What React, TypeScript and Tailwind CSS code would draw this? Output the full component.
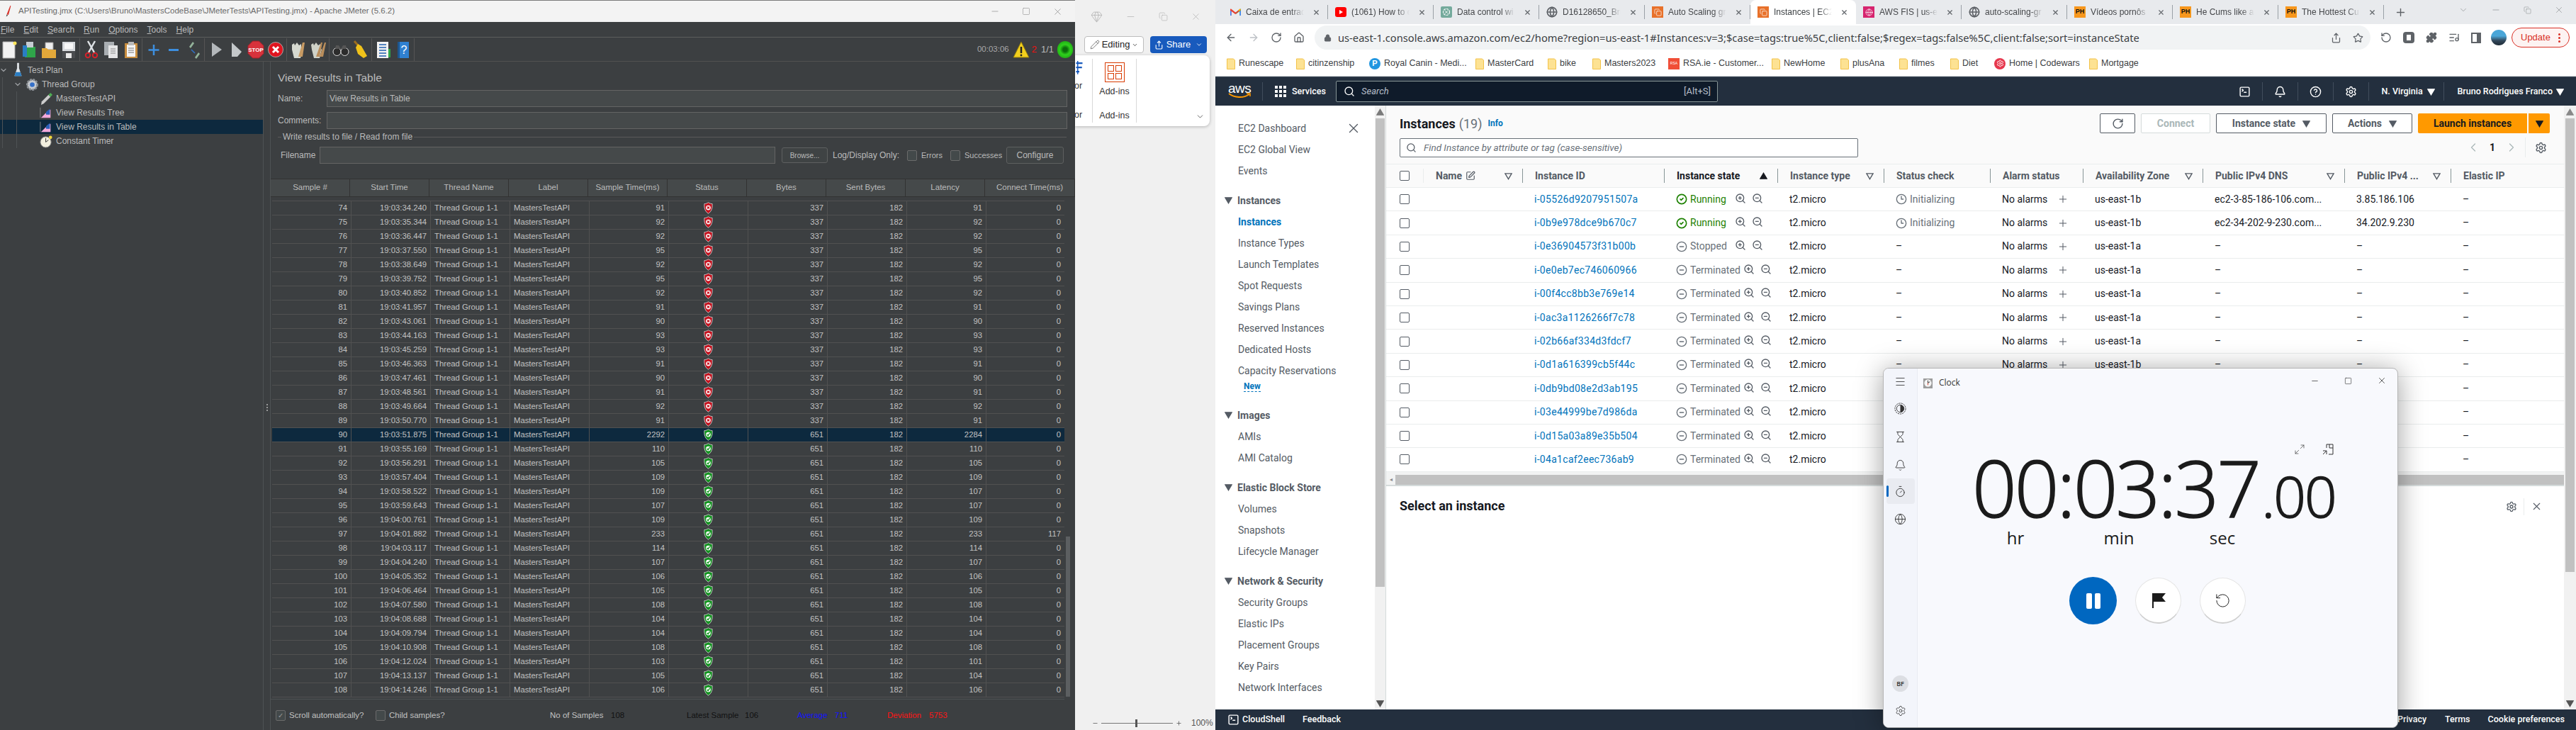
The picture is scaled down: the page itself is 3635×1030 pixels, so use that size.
import React from 'react';
import {
  ArrowLeft, ArrowRight, RotateCw, House, Lock, Star, Share, Puzzle, ListMusic, X, Plus, Minus, Square, Copy, ChevronDown,
  ChevronLeft, ChevronRight, Search, Bell, CircleHelp, Settings, SquareTerminal, ZoomIn, ZoomOut, CircleCheck, CircleMinus,
  Clock3, Pencil, Menu, Hourglass, Timer, Globe, RotateCcw, Maximize2, Gem, SquarePen,
} from 'lucide-react';

const SANS = "font-['Liberation_Sans',sans-serif]";

/* ---------- JMeter data ---------- */
const TIMES = [
  '19:03:34.240', '19:03:35.344', '19:03:36.447', '19:03:37.550', '19:03:38.649', '19:03:39.752', '19:03:40.852',
  '19:03:41.957', '19:03:43.061', '19:03:44.163', '19:03:45.259', '19:03:46.363', '19:03:47.461', '19:03:48.561',
  '19:03:49.664', '19:03:50.770', '19:03:51.875', '19:03:55.169', '19:03:56.291', '19:03:57.404', '19:03:58.522',
  '19:03:59.643', '19:04:00.761', '19:04:01.882', '19:04:03.117', '19:04:04.240', '19:04:05.352', '19:04:06.464',
  '19:04:07.580', '19:04:08.688', '19:04:09.794', '19:04:10.908', '19:04:12.024', '19:04:13.137', '19:04:14.246',
];
const SAMPLE = [91, 92, 92, 95, 92, 95, 92, 91, 90, 93, 93, 91, 90, 91, 92, 91, 2292, 110, 105, 109, 109, 107, 109, 233, 114, 107, 106, 105, 108, 104, 104, 108, 103, 105, 106];
const LATENCY = [91, 92, 92, 95, 92, 95, 92, 91, 90, 93, 93, 91, 90, 91, 92, 91, 2284, 110, 105, 109, 107, 107, 109, 233, 114, 107, 106, 105, 108, 104, 104, 108, 101, 104, 106];
const HEADERS = ['Sample #', 'Start Time', 'Thread Name', 'Label', 'Sample Time(ms)', 'Status', 'Bytes', 'Sent Bytes', 'Latency', 'Connect Time(ms)'];

/* ---------- JMeter icons ---------- */
const Shield = ({ ok }: { ok: boolean }) => (
  <svg viewBox="0 0 14 18" className="w-[13px] h-[17px]">
    <path d="M7 .6C9 2 11 2.6 13 2.6c.5 6.5-1 11.5-6 14.8C2 14.100.5 9.100 1 2.600 3 2.600 5 2 7 .6Z" fill={ok ? '#12931f' : '#c5101d'} stroke="#c9c9c9" strokeWidth="1" />
    <circle cx="7" cy="8.5" r="3.6" fill="#fff" />
    {ok ? (
      <path d="M5 8.500l1.600 1.800L9.200 6.500" fill="none" stroke="#12931f" strokeWidth="1.5" />
    ) : (
      <path d="M5.400 6.900l3.200 3.200m0-3.200l-3.200 3.200" stroke="#c5101d" strokeWidth="1.5" />
    )}
  </svg>
);

const TB = ({ children }: { children: React.ReactNode }) => (
  <svg viewBox="0 0 24 26" className="w-[24px] h-[26px] shrink-0 block">{children}</svg>
);

const toolbarIcons: Record<string, React.ReactNode> = {
  new: <TB><path d="M3 2h15l2 3v20H3z" fill="#f2f2f2" stroke="#aaa" /><circle cx="20" cy="4" r="2.5" fill="#ffe65c" /></TB>,
  templates: <TB><path d="M6 9h15v15H6z" fill="#2fa54a" /><path d="M8 2h10v8H8z" fill="#c6cdd3" /><path d="M3 7h6v16H3z" fill="#2a7ec4" /></TB>,
  open: <TB><path d="M7 3h11v10H7z" fill="#eee" stroke="#999" /><path d="M2 11h7l2 2h11v12H2z" fill="#e2a83a" /></TB>,
  save: <TB><path d="M3 2h18v23H3z" fill="#d7dadd" /><path d="M6 4h12v8H6z" fill="#f7f7f7" /><path d="M3 15h18v10H3z" fill="#4b4d50" /><path d="M8 18h8v7H8z" fill="#e8e8e8" /></TB>,
  cut: <TB><path d="M7 1l9 16M17 1L8 17" stroke="#dfe3e6" strokeWidth="2.5" /><circle cx="7" cy="21" r="3.2" fill="none" stroke="#d5222a" strokeWidth="2" /><circle cx="17" cy="21" r="3.2" fill="none" stroke="#d5222a" strokeWidth="2" /></TB>,
  copy: <TB><path d="M2 2h14v19H2z" fill="#a9aeb2" /><path d="M8 7h13v18H8z" fill="#e4e5e6" /><path d="M11 12h7M11 15h7M11 18h7" stroke="#888" /></TB>,
  paste: <TB><path d="M3 4h18v21H3z" fill="#c78d3f" /><path d="M6 6h12v17H6z" fill="#f4f4f4" /><path d="M8 2h8v5H8z" fill="#bbb" /><path d="M8 11h8M8 14h8M8 17h8" stroke="#777" /></TB>,
  plus: <TB><path d="M12 6v15M4.500 13.500h15" stroke="#3d8fe0" strokeWidth="2.5" /></TB>,
  minus: <TB><path d="M5 13.500h14" stroke="#3d8fe0" strokeWidth="3" /></TB>,
  toggle: <TB><path d="M6 9l5-7 2 2-5 7z" fill="#93b39a" /><path d="M9 13l5 5" stroke="#2f72c9" strokeWidth="1.5" /><path d="M14 24l5-7 2 2-5 7z" fill="#93b39a" /></TB>,
  play: <TB><path d="M6 3l14 10L6 23z" fill="#b4b8bb" /></TB>,
  playNo: <TB><path d="M6 3l14 13-6 7H6z" fill="#c4c8ca" /></TB>,
  stop: <TB><path d="M7.500 1h9L23 7.500v11L16.500 25h-9L1 18.500v-11z" fill="#d7323c" stroke="#9e2028" /><text x="12" y="16" fontSize="8" fontWeight="700" fill="#fff" textAnchor="middle" fontFamily="Liberation Sans">STOP</text></TB>,
  shutdown: <TB><circle cx="12" cy="13" r="10.5" fill="#e0141f" stroke="#a5a5a5" /><path d="M8 9l8 8m0-8l-8 8" stroke="#fff" strokeWidth="3" /></TB>,
  clear: <TB><path d="M3 6l3-2 1 3 3-4 3 4 3-2v5l2 3-3 12H6L3 13z" fill="#d6d9d0" /><path d="M18 3h3l-3 20h-6z" fill="#c79a63" /></TB>,
  clearAll: <TB><path d="M2 6l3-2 1 3 3-4 3 4 3-2v5l2 3-3 12H6L3 13z" fill="#cfd2c8" /><path d="M16 3h2l-4 20h-5z" fill="#b98d5b" /><path d="M21 3h2l-4 20h-5z" fill="#b98d5b" /></TB>,
  find: <TB><circle cx="6.500" cy="16" r="5.5" fill="#2c2c2c" stroke="#ddd" /><circle cx="17.500" cy="16" r="5.5" fill="#2c2c2c" stroke="#ddd" /><path d="M5 7h4l3 5 3-5h4l1 5H4z" fill="#555" /></TB>,
  broom: <TB><path d="M3 1l6 7" stroke="#9c6d1f" strokeWidth="3" /><path d="M8 5l5 3 8 14-5 3-8-6-3-9z" fill="#f0c21a" /></TB>,
  fn: <TB><path d="M3 2h16v23H3z" fill="#f2f2f2" /><path d="M6 6h10M6 10h10M6 14h10M6 18h10M6 22h10" stroke="#2060b0" strokeWidth="1.5" /><path d="M19 12h3v12h-3z" fill="#2fa54a" /></TB>,
  help: <TB><path d="M4 2h16v23H4z" fill="#2f80d0" /><path d="M4 2h3v23H4z" fill="#1d568f" /><text x="13" y="19" fontSize="16" fill="#fff" textAnchor="middle" fontFamily="Liberation Sans">?</text></TB>,
};

const toolbarGroups = [
  ['new', 'templates', 'open', 'save'],
  ['cut', 'copy', 'paste'],
  ['plus', 'minus', 'toggle'],
  ['play', 'playNo', 'stop', 'shutdown'],
  ['clear', 'clearAll'],
  ['find', 'broom'],
  ['fn', 'help'],
];

const Flask = () => (
  <svg viewBox="0 0 14 24" className="w-[13px] h-[24px]"><path d="M5.500 1h3v8l4 12H1.500l4-12z" fill="#dfe3e6" /><path d="M3.500 15h7l2 6H1.500z" fill="#2a7ec4" /></svg>
);
const GearIcon = () => (
  <svg viewBox="0 0 20 20" className="w-[19px] h-[19px]"><circle cx="10" cy="10" r="7.5" fill="#c8ccd0" stroke="#8c9196" strokeWidth="3" strokeDasharray="3 1.5" /><circle cx="10" cy="10" r="3.5" fill="#3570c8" /></svg>
);
const Pipette = () => (
  <svg viewBox="0 0 20 20" className="w-[19px] h-[19px]"><path d="M2 19l1-5L13 4l3 3L6 17z" fill="#ccc" /><path d="M13 4l3-3 3 3-3 3z" fill="#4fae55" /></svg>
);
const Listener = () => (
  <svg viewBox="0 0 20 20" className="w-[18px] h-[20px]"><path d="M2 18l7-7 8-6v13z" fill="#f4a9dc" /><path d="M10 9l6-5v9h-6z" fill="#2a60b8" /><path d="M1 2v16" stroke="#888" /></svg>
);
const TimerIcon = () => (
  <svg viewBox="0 0 20 20" className="w-[19px] h-[19px]"><circle cx="9" cy="11" r="8" fill="#f3f0e0" stroke="#888" /><path d="M9 5v6l4-3" stroke="#333" fill="none" /><circle cx="16" cy="4" r="2.5" fill="#f2d83b" /></svg>
);

const TreeRow = ({ indent, icon, label, chevron, selected }: { indent: string; icon: React.ReactNode; label: string; chevron?: boolean; selected?: boolean }) => (
  <div className={`relative flex items-center h-[20px] ${indent} ${selected ? 'bg-[#0d293e]' : ''}`}>
    {chevron && <ChevronDown size={12} strokeWidth={2.5} className="absolute text-[#9a9da0] -translate-x-[16px]" />}
    <span className="w-[20px] flex justify-center shrink-0">{icon}</span>
    <span className="ml-[4px] text-[12px] text-[#bbbbbb] whitespace-nowrap">{label}</span>
  </div>
);

const Check = ({ checked }: { checked?: boolean }) => (
  <span className="flex items-center justify-center w-[14px] h-[15px] bg-[#43494a] border border-[#6b6b6b] rounded-[2px] text-[10px] text-[#999] leading-none">{checked ? '✓' : ''}</span>
);

const JMeter = () => (
  <div className={`${SANS} w-[1517px] shrink-0 h-full flex flex-col bg-[#3c3f41] text-[#bbbbbb]`}>
    <div className="h-[31px] shrink-0 bg-[#f3f3f3] border-t border-[#7a7a7a] flex items-center text-[#6a6a6a] text-[11.5px]">
      <svg viewBox="0 0 12 20" className="w-[10px] h-[18px] ml-[7px]"><path d="M9 0L3 15l3 1L10 1z" fill="#d8332b" /><path d="M3 15l-1 4 3-2z" fill="#444" /></svg>
      <span className="ml-[9px]">APITesting.jmx (C:\Users\Bruno\MastersCodeBase\JMeterTests\APITesting.jmx) - Apache JMeter (5.6.2)</span>
      <div className="ml-auto flex items-center gap-[31px] mr-[17px] text-[#7a7a7a]">
        <Minus size={14} strokeWidth={1} />
        <Square size={12} strokeWidth={1} />
        <X size={15} strokeWidth={1} />
      </div>
    </div>
    <div className="h-[22px] shrink-0 flex items-center border-b border-[#5d5d5d] text-[12px] pl-[1px] gap-[13px]">
      {['File', 'Edit', 'Search', 'Run', 'Options', 'Tools', 'Help'].map(m => (
        <span key={m}><span className="underline">{m[0]}</span>{m.slice(1)}</span>
      ))}
    </div>
    <div className="h-[34px] shrink-0 flex items-center border-b border-[#515151] pl-[1px]">
      {toolbarGroups.map((g, i) => (
        <div key={i} className="flex items-center gap-[4px] pr-[3px] mr-[4px] border-r border-[#555] h-[32px]">
          {g.map(k => <span key={k}>{toolbarIcons[k]}</span>)}
        </div>
      ))}
      <div className="ml-auto flex items-center pr-[3px] text-[11.5px]">
        <span className="text-[#a8a8a8]">00:03:06</span>
        <svg viewBox="0 0 24 24" className="w-[24px] h-[26px] ml-[5px]"><path d="M12 1l11 22H1z" fill="#f2cf1d" stroke="#8f7a10" /><path d="M12 8v9" stroke="#222" strokeWidth="2.5" /><circle cx="12" cy="20" r="1.4" fill="#222" /></svg>
        <span className="text-[#ee1111] ml-[3px] text-[13px]">2</span>
        <span className="ml-[6px] text-[13px]">1/1</span>
        <span className="ml-[5px] w-[22px] h-[24px] rounded-full bg-[radial-gradient(circle,#0b6d0b_18%,#2fd11c_45%,#148f10_100%)]" />
      </div>
    </div>
    <div className="flex-1 flex min-h-0">
      <div className="w-[371px] shrink-0 relative pl-[15px] pt-[2px]">
        <TreeRow indent="" icon={<Flask />} label="Test Plan" chevron />
        <TreeRow indent="pl-[20px]" icon={<GearIcon />} label="Thread Group" chevron />
        <TreeRow indent="pl-[40px]" icon={<Pipette />} label="MastersTestAPI" />
        <TreeRow indent="pl-[40px]" icon={<Listener />} label="View Results Tree" />
        <TreeRow indent="pl-[55px] -ml-[15px]" icon={<Listener />} label="View Results in Table" selected />
        <TreeRow indent="pl-[40px]" icon={<TimerIcon />} label="Constant Timer" />
        <span className="absolute left-[3px] top-[22px] h-[100px] border-l border-[#4e5254]" />
        <span className="absolute left-[23px] top-[42px] h-[80px] border-l border-[#4e5254]" />
      </div>
      <div className="w-[11px] shrink-0 border-x border-[#4e5254] relative flex flex-col items-center justify-center gap-[2px] pt-[32px]">
        <span className="w-[2px] h-[2px] bg-[#999]" /><span className="w-[2px] h-[2px] bg-[#999]" /><span className="w-[2px] h-[2px] bg-[#999]" />
      </div>
      <div className="flex-1 flex flex-col min-w-0">
        <div className="pl-[10px] pr-[11px] pt-[11px] h-[165px] shrink-0 text-[12px]">
          <div className="text-[15.5px] leading-[24px]">View Results in Table</div>
          <div className="flex items-center mt-[5px] h-[24px]">
            <span className="w-[69px]">Name:</span>
            <div className="flex-1 h-full bg-[#45494a] border border-[#646464] flex items-center px-[3px]">View Results in Table</div>
          </div>
          <div className="flex items-center mt-[7px] h-[24px]">
            <span className="w-[69px]">Comments:</span>
            <div className="flex-1 h-full bg-[#45494a] border border-[#646464]" />
          </div>
          <div className="flex items-center mt-[1px] h-[20px]">
            <span className="w-[5px] border-t border-[#5a5a5a]" />
            <span className="px-[2px]">Write results to file / Read from file</span>
            <span className="flex-1 border-t border-[#5a5a5a] mr-[1px]" />
          </div>
          <div className="flex items-center mt-[4px] h-[24px] pl-[4px]">
            <span className="w-[55px]">Filename</span>
            <div className="w-[643px] h-full bg-[#45494a] border border-[#646464]" />
            <div className="ml-[9px] w-[65px] h-[22px] bg-[#3f4344] border border-[#5e6060] rounded-[3px] flex items-center justify-center text-[10px]">Browse...</div>
            <span className="ml-[7px] w-[105px] whitespace-nowrap">Log/Display Only:</span>
            <Check />
            <span className="ml-[6px] w-[41px] text-[11px]">Errors</span>
            <Check />
            <span className="ml-[6px] w-[59px] text-[11px]">Successes</span>
            <div className="w-[81px] h-[24px] bg-[#3f4344] border border-[#5e6060] rounded-[3px] flex items-center justify-center">Configure</div>
          </div>
        </div>
        <div className="h-[26px] shrink-0 flex bg-[#45494a] border-y border-[#323232] text-[11.5px] text-[#bbbbbb]">
          {HEADERS.map((h, i) => (
            <div key={h} className={`${i === 9 ? 'flex-1' : 'w-[112px]'} shrink-0 flex items-center justify-center border-r border-[#323232] whitespace-nowrap`}>{h}</div>
          ))}
        </div>
        <div className="flex-1 flex min-h-0 pt-[5px] pl-[2px]">
          <div className="w-[1118px] shrink-0 text-[11.3px] text-[#c2c2c2]">
            {TIMES.map((t, i) => {
              const n = 74 + i;
              const ok = n >= 90;
              const cells = [String(n), t, 'Thread Group 1-1', 'MastersTestAPI', String(SAMPLE[i]), '', ok ? '651' : '337', '182', String(LATENCY[i]), n === 97 ? '117' : '0'];
              return (
                <div key={n} className={`h-[20px] flex border-t border-[#515151] ${n === 90 ? 'bg-[#0d293e]' : ''}`}>
                  {cells.map((c, j) => (
                    <div key={j} className={`${j === 9 ? 'w-[110px]' : 'w-[112px] border-r border-[#515151]'} shrink-0 flex items-center px-[5px] whitespace-nowrap ${j === 2 || j === 3 ? 'justify-start' : j === 5 ? 'justify-center' : 'justify-end'}`}>
                      {j === 5 ? <Shield ok={ok} /> : c}
                    </div>
                  ))}
                </div>
              );
            })}
            <div className="border-t border-[#515151]" />
            <div className="h-[46px] border-t border-[#4e5254] mt-[2px] flex items-center pl-[7px] text-[11.5px] relative -ml-[2px]">
              <Check checked />
              <span className="ml-[5px] w-[122px]">Scroll automatically?</span>
              <Check />
              <span className="ml-[5px] w-[227px]">Child samples?</span>
              <span className="w-[86px]">No of Samples</span>
              <span className="w-[107px] text-[#111]">108</span>
              <span className="w-[82px] text-[#111]">Latest Sample</span>
              <span className="w-[74px] text-[#111]">106</span>
              <span className="w-[53px] text-[#1212ff]">Average</span>
              <span className="w-[74px] text-[#1212ff]">711</span>
              <span className="w-[59px] text-[#ff1414]">Deviation</span>
              <span className="text-[#ff1414]">5753</span>
            </div>
          </div>
          <div className="w-[6px] ml-[2px] h-[700px] flex flex-col">
            <div className="h-[474px]" />
            <div className="h-[226px] bg-[#5c5f61]" />
          </div>
        </div>
      </div>
    </div>
  </div>
);

/* ---------- Word window sliver ---------- */
const Word = () => (
  <div className={`${SANS} w-[198px] shrink-0 h-full bg-[#f0f0f0] flex flex-col relative`}>
    <div className="h-[46px] shrink-0 flex items-center text-[#a8a8a8] pl-[22px] gap-[32px]">
      <Gem size={17} strokeWidth={1} />
      <Minus size={15} strokeWidth={1} />
      <Copy size={13} strokeWidth={1} />
      <X size={15} strokeWidth={1} />
    </div>
    <div className="h-[29px] shrink-0 flex items-start pl-[13px] gap-[9px] pt-[5px] text-[#222]">
      <div className="w-[84px] h-[24px] bg-white border border-[#bdbdbd] rounded-[4px] flex items-center justify-center gap-[3px] text-[13px]"><Pencil size={14} strokeWidth={1} />Editing<ChevronDown size={9} /></div>
      <div className="w-[80px] h-[24px] bg-[#185abd] text-white rounded-[4px] flex items-center justify-center gap-[4px] text-[13px]"><Share size={13} />Share<ChevronDown size={10} className="ml-[3px]" /></div>
    </div>
    <div className="h-[100px] w-[190px] mt-[3px] shrink-0 bg-white rounded-r-[8px] shadow-[0_1px_4px_rgba(0,0,0,0.25)] flex text-[12.5px] text-[#333] relative">
      <div className="w-[25px] border-r border-[#d8d8d8] my-[5px] flex flex-col justify-between overflow-hidden pb-[1px]">
        <svg viewBox="0 0 12 26" className="w-[12px] h-[24px] mt-[3px]"><path d="M0 4h12M0 12h11M0 20h6" stroke="#185abd" strokeWidth="3" /><path d="M3 0v25" stroke="#185abd" strokeWidth="2" /></svg>
        <span className="-ml-[1px] mt-[6px] mb-[23px]">or</span>
        <span className="-ml-[1px]">or</span>
      </div>
      <div className="w-[62px] border-r border-[#d8d8d8] my-[5px] flex flex-col items-center">
        <div className="mt-[5px] w-[28px] h-[28px] border border-[#d83b01] grid grid-cols-2 gap-[2px] p-[3px]">
          <span className="border border-[#d83b01]" /><span className="border border-[#d83b01]" /><span className="border border-[#d83b01]" /><span className="border border-[#d83b01]" />
        </div>
        <span className="mt-[4px]">Add-ins</span>
        <span className="mt-auto">Add-ins</span>
      </div>
      <ChevronDown size={13} strokeWidth={1.5} className="absolute right-[7px] bottom-[7px] text-[#444]" />
    </div>
    <div className="mt-auto h-[18px] mb-[1px] flex items-center pl-[24px] text-[12px] text-[#555]">
      <Minus size={9} />
      <div className="w-[101px] mx-[4px] relative h-[11px] flex items-center">
        <div className="w-full border-t border-[#777]" />
        <span className="absolute left-[48px] w-[3px] h-[11px] bg-[#555]" />
      </div>
      <Plus size={9} />
      <span className="ml-[13px]">100%</span>
    </div>
  </div>
);

/* ---------- Chrome ---------- */
const Gmail = () => (
  <svg viewBox="0 0 24 18" className="w-[15px] h-[14px]"><path d="M1 17V4l11 8" fill="none" stroke="#ea4335" strokeWidth="3" /><path d="M23 17V4L12 12" fill="none" stroke="#34a853" strokeWidth="3" /><path d="M1 3l11 9 11-9" fill="none" stroke="#ea4335" strokeWidth="3" /><path d="M23 17V6" stroke="#4285f4" strokeWidth="3" /><path d="M1 17V6" stroke="#4285f4" strokeWidth="3" /><path d="M23 3l-4 3" stroke="#fbbc04" strokeWidth="3" /></svg>
);
const Yt = () => <span className="w-[16px] h-[14px] bg-[#f00] rounded-[3px] flex items-center justify-center"><span className="border-l-[5px] border-l-white border-y-[3px] border-y-transparent" /></span>;
const Gpt = () => <span className="w-[16px] h-[16px] bg-[#74aa9c] rounded-[2px] flex items-center justify-center"><svg viewBox="0 0 16 16" className="w-[12px] h-[12px]"><circle cx="8" cy="8" r="6" fill="none" stroke="#fff" strokeWidth="1.5" strokeDasharray="4 1.5" /><path d="M5 5l6 6M11 5l-6 6" stroke="#fff" /></svg></span>;
const Earth = () => <Globe size={16} strokeWidth={2.5} className="text-[#5f6368]" />;
const AwsFav = () => <span className="w-[16px] h-[16px] bg-[#e8712a] flex items-center justify-center"><Copy size={11} className="text-white" strokeWidth={1.5} /></span>;
const Fis = () => <span className="w-[16px] h-[16px] bg-[#d6246e] flex items-center justify-center"><Globe size={11} className="text-white" strokeWidth={1.5} /></span>;
const Ph = () => <span className="w-[16px] h-[16px] bg-[#f7971d] flex items-center justify-center text-[#111] text-[9px] font-bold">PH</span>;

const TABS: { title: string; icon: React.ReactNode; active?: boolean }[] = [
  { title: 'Caixa de entrad', icon: <Gmail /> },
  { title: '(1061) How to c', icon: <Yt /> },
  { title: 'Data control wi', icon: <Gpt /> },
  { title: 'D16128650_Bru', icon: <Earth /> },
  { title: 'Auto Scaling gr', icon: <AwsFav /> },
  { title: 'Instances | EC2', icon: <AwsFav />, active: true },
  { title: 'AWS FIS | us-ea', icon: <Fis /> },
  { title: 'auto-scaling-gr', icon: <Earth /> },
  { title: 'Vídeos pornôs', icon: <Ph /> },
  { title: 'He Cums like a', icon: <Ph /> },
  { title: 'The Hottest Cu', icon: <Ph /> },
];

const Folder = () => (
  <svg viewBox="0 0 12 16" className="w-[12px] h-[16px] shrink-0"><path d="M.5 1h9l2 2v12.500H.5z" fill="#fde293" stroke="#f2c34a" /></svg>
);
const RoyalCanin = () => <span className="w-[16px] h-[16px] rounded-full bg-[#2196e0] text-white text-[11px] flex items-center justify-center font-bold shrink-0">P</span>;
const Rsa = () => <span className="w-[16px] h-[16px] bg-[#f04e37] text-white text-[5px] flex items-center justify-center shrink-0">RSA</span>;
const Codewars = () => <span className="w-[16px] h-[16px] rounded-full bg-[#e6374d] flex items-center justify-center shrink-0"><Settings size={11} className="text-white" /></span>;

const BOOKMARKS: { label: string; w: string; icon?: React.ReactNode }[] = [
  { label: 'Runescape', w: 'w-[98px]' },
  { label: 'citinzenship', w: 'w-[103px]' },
  { label: 'Royal Canin - Medi...', w: 'w-[150px]', icon: <RoyalCanin /> },
  { label: 'MasterCard', w: 'w-[102px]' },
  { label: 'bike', w: 'w-[63px]' },
  { label: 'Masters2023', w: 'w-[107px]' },
  { label: 'RSA.ie - Customer...', w: 'w-[146px]', icon: <Rsa /> },
  { label: 'NewHome', w: 'w-[97px]' },
  { label: 'plusAna', w: 'w-[83px]' },
  { label: 'filmes', w: 'w-[72px]' },
  { label: 'Diet', w: 'w-[62px]' },
  { label: 'Home | Codewars', w: 'w-[134px]', icon: <Codewars /> },
  { label: 'Mortgage', w: 'w-[80px]' },
];

const ChromeBar = () => (
  <div className="shrink-0">
    <div className="h-[34px] bg-[#e8eaed] flex pl-[10px] text-[12px] text-[#45474a]">
      {TABS.map(t => (
        <div key={t.title} className={`relative w-[149px] shrink-0 flex items-center pl-[10px] ${t.active ? 'bg-white rounded-t-[8px] text-[#3c4043]' : ''}`}>
          <span className="w-[16px] flex justify-center shrink-0">{t.icon}</span>
          <span className="ml-[7px] w-[82px] whitespace-nowrap [mask-image:linear-gradient(to_right,black_78%,transparent)]">{t.title}</span>
          <X size={11} strokeWidth={2.5} className="ml-[12px] text-[#5f6368]" />
          {!t.active && <span className="absolute right-0 top-[7px] h-[20px] border-r border-[#9aa0a6]" />}
        </div>
      ))}
      <Plus size={17} strokeWidth={2} className="ml-[15px] mt-[9px] text-[#5f6368]" />
      <div className="ml-auto flex items-center gap-[32px] pr-[17px] pb-[6px] text-[#7a7d80]">
        <ChevronDown size={14} strokeWidth={1} />
        <Minus size={14} strokeWidth={1} />
        <Copy size={11} strokeWidth={1} />
        <X size={14} strokeWidth={1} />
      </div>
    </div>
    <div className="h-[38px] bg-white flex items-center text-[#5f6368] pl-[14px] pr-[8px]">
      <div className="flex items-center gap-[16px]">
        <ArrowLeft size={16} strokeWidth={2} />
        <ArrowRight size={16} strokeWidth={2} className="text-[#bdc1c6]" />
        <RotateCw size={16} strokeWidth={2} />
        <House size={16} strokeWidth={2} />
      </div>
      <div className="ml-[14px] w-[1490px] h-[34px] rounded-full bg-[#f1f3f4] flex items-center pl-[13px] pr-[10px] text-[14.7px] text-[#3c4043]">
        <Lock size={11} fill="#5f6368" className="shrink-0 text-[#5f6368]" />
        <span className="font-['Noto_Sans',sans-serif] ml-[9px] whitespace-nowrap">us-east-1.console.aws.amazon.com/ec2/home?region=us-east-1#Instances:v=3;$case=tags:true%5C,client:false;$regex=tags:false%5C,client:false;sort=instanceState</span>
        <div className="ml-auto flex items-center gap-[16px] text-[#5f6368]"><Share size={15} /><Star size={15} /></div>
      </div>
      <div className="ml-[14px] flex items-center gap-[16px]">
        <RotateCcw size={16} />
        <span className="w-[16px] h-[16px] rounded-[4px] bg-[#5f6368] flex items-center justify-center"><span className="w-[6px] h-[8px] bg-white" /></span>
        <Puzzle size={16} fill="#5f6368" />
        <ListMusic size={16} />
        <span className="w-[14px] h-[15px] border-2 border-[#5f6368] border-r-[6px]" />
      </div>
      <span className="ml-[14px] w-[22px] h-[22px] rounded-full bg-[linear-gradient(180deg,#4aa6d8_40%,#33475a_70%,#1e2b36)] shrink-0" />
      <div className="ml-[7px] w-[82px] h-[28px] rounded-full border border-[#d93025] bg-[#fdf3f2] flex items-center pl-[12px] text-[#d93025] text-[13px]">
        Update
        <span className="ml-auto mr-[12px] flex flex-col gap-[2px]"><span className="w-[3px] h-[3px] rounded-full bg-[#d93025]" /><span className="w-[3px] h-[3px] rounded-full bg-[#d93025]" /><span className="w-[3px] h-[3px] rounded-full bg-[#d93025]" /></span>
      </div>
    </div>
    <div className="h-[36px] bg-white flex items-center pl-[16px] text-[12.5px] text-[#3c4043] border-b border-[#d0d3d6]">
      {BOOKMARKS.map(b => (
        <div key={b.label} className={`${b.w} shrink-0 flex items-center gap-[5px] whitespace-nowrap`}>
          {b.icon ?? <Folder />}{b.label}
        </div>
      ))}
    </div>
  </div>
);

/* ---------- AWS console ---------- */
const NAV: { text: string; kind: 'item' | 'group' | 'active' | 'new'; gap?: string }[] = [
  { text: 'EC2 Dashboard', kind: 'item' },
  { text: 'EC2 Global View', kind: 'item' },
  { text: 'Events', kind: 'item' },
  { text: 'Instances', kind: 'group', gap: 'mt-[12px]' },
  { text: 'Instances', kind: 'active' },
  { text: 'Instance Types', kind: 'item' },
  { text: 'Launch Templates', kind: 'item' },
  { text: 'Spot Requests', kind: 'item' },
  { text: 'Savings Plans', kind: 'item' },
  { text: 'Reserved Instances', kind: 'item' },
  { text: 'Dedicated Hosts', kind: 'item' },
  { text: 'Capacity Reservations', kind: 'item' },
  { text: 'New', kind: 'new' },
  { text: 'Images', kind: 'group', gap: 'mt-[18px]' },
  { text: 'AMIs', kind: 'item' },
  { text: 'AMI Catalog', kind: 'item' },
  { text: 'Elastic Block Store', kind: 'group', gap: 'mt-[12px]' },
  { text: 'Volumes', kind: 'item' },
  { text: 'Snapshots', kind: 'item' },
  { text: 'Lifecycle Manager', kind: 'item' },
  { text: 'Network & Security', kind: 'group', gap: 'mt-[12px]' },
  { text: 'Security Groups', kind: 'item' },
  { text: 'Elastic IPs', kind: 'item' },
  { text: 'Placement Groups', kind: 'item' },
  { text: 'Key Pairs', kind: 'item' },
  { text: 'Network Interfaces', kind: 'item' },
];

const INSTANCES = [
  ['i-05526d9207951507a', 'Running', 'us-east-1b', 'ec2-3-85-186-106.com...', '3.85.186.106'],
  ['i-0b9e978dce9b670c7', 'Running', 'us-east-1b', 'ec2-34-202-9-230.com...', '34.202.9.230'],
  ['i-0e36904573f31b00b', 'Stopped', 'us-east-1a', '–', '–'],
  ['i-0e0eb7ec746060966', 'Terminated', 'us-east-1a', '–', '–'],
  ['i-00f4cc8bb3e769e14', 'Terminated', 'us-east-1a', '–', '–'],
  ['i-0ac3a1126266f7c78', 'Terminated', 'us-east-1a', '–', '–'],
  ['i-02b66af334d3fdcf7', 'Terminated', 'us-east-1a', '–', '–'],
  ['i-0d1a616399cb5f44c', 'Terminated', 'us-east-1b', '–', '–'],
  ['i-0db9bd08e2d3ab195', 'Terminated', 'us-east-1b', '–', '–'],
  ['i-03e44999be7d986da', 'Terminated', 'us-east-1b', '–', '–'],
  ['i-0d15a03a89e35b504', 'Terminated', 'us-east-1b', '–', '–'],
  ['i-04a1caf2eec736ab9', 'Terminated', 'us-east-1b', '–', '–'],
];

const TriDown = ({ hollow, up }: { hollow?: boolean; up?: boolean }) => (
  <svg viewBox="0 0 12 12" className={`block w-[11px] h-[11px] ${up ? 'rotate-180' : ''}`}><path d="M1 2h10L6 10.500z" fill={hollow ? 'none' : 'currentColor'} stroke="currentColor" strokeWidth="1.5" /></svg>
);

const Box = () => <span className="block w-[14px] h-[14px] rounded-[2px] border border-[#545b64] bg-white shrink-0" />;

const COLS: { title: string; w: string; filter?: boolean }[] = [
  { title: 'Name', w: 'w-[140px]', filter: true },
  { title: 'Instance ID', w: 'w-[200px]' },
  { title: 'Instance state', w: 'w-[160px]' },
  { title: 'Instance type', w: 'w-[150px]', filter: true },
  { title: 'Status check', w: 'w-[150px]' },
  { title: 'Alarm status', w: 'w-[131px]' },
  { title: 'Availability Zone', w: 'w-[169px]', filter: true },
  { title: 'Public IPv4 DNS', w: 'w-[200px]', filter: true },
  { title: 'Public IPv4 ...', w: 'w-[150px]', filter: true },
  { title: 'Elastic IP', w: 'w-[151px]' },
];

const Console = () => (
  <div className="flex-1 min-h-0 flex flex-col font-['Roboto',sans-serif]">
    <div className="h-[41px] shrink-0 bg-[#232f3e] border-t border-[#3a4654] flex items-center text-white text-[12.5px]">
      <div className="w-[48px] ml-[18px] relative shrink-0 flex flex-col items-start leading-none">
        <span className={`${SANS} text-[19px] tracking-tight -mt-[5px]`}>aws</span>
        <svg viewBox="0 0 32 8" className="w-[32px] h-[8px] -mt-[3px]"><path d="M1 1c8 6 20 7 29 1" fill="none" stroke="#f90" strokeWidth="2" /><path d="M26 1h5v4" fill="none" stroke="#f90" strokeWidth="1.5" /></svg>
      </div>
      <span className="h-[26px] border-l border-[#414d5c]" />
      <div className="ml-[17px] w-[86px] shrink-0 flex items-center gap-[8px]">
        <span className="grid grid-cols-3 gap-[2px] w-[16px]">
          {Array.from({ length: 9 }).map((_, i) => <span key={i} className="w-[4px] h-[4px] bg-white" />)}
        </span>
        <span className="font-medium">Services</span>
      </div>
      <div className="w-[539px] h-[30px] shrink-0 bg-[#0f1b2a] border border-[#879596] rounded-[2px] flex items-center pl-[10px] pr-[9px] text-[#b6bec9] text-[13px]">
        <Search size={16} className="text-white" />
        <span className="ml-[9px] italic">Search</span>
        <span className="ml-auto">[Alt+S]</span>
      </div>
      <div className="ml-auto flex items-center h-[26px] pr-[17px] font-medium whitespace-nowrap">
        {[<SquareTerminal size={17} key="t" />, <Bell size={17} key="b" />, <CircleHelp size={17} key="h" />, <Settings size={17} key="s" />].map((ic, i) => (
          <span key={i} className="w-[50px] h-full flex items-center justify-center border-r border-[#414d5c]">{ic}</span>
        ))}
        <span className="pl-[17px] flex items-center gap-[6px] h-full border-r border-[#414d5c] w-[106px]">N. Virginia<TriDown /></span>
        <span className="pl-[18px] flex items-center gap-[5px] h-full">Bruno Rodrigues Franco<TriDown /></span>
      </div>
    </div>
    <div className="flex-1 min-h-0 flex">
      <div className="w-[225px] shrink-0 bg-white relative overflow-hidden pt-[17px] text-[14px] text-[#545b64]">
        <X size={22} strokeWidth={1.5} className="absolute right-[19px] top-[21px] text-[#545b64]" />
        {NAV.map((n, i) => (
          n.kind === 'new' ? (
            <div key={i} className="h-[15px] pl-[40px] text-[12px] font-bold leading-[15px] text-[#0073bb]"><span className="border-b border-dashed border-[#0073bb]">New</span></div>
          ) : (
            <div key={i} className={`h-[30px] flex items-center ${n.gap ?? ''} ${n.kind === 'group' ? 'pl-[13px] font-bold' : 'pl-[32px]'} ${n.kind === 'active' ? 'text-[#0073bb] font-bold' : ''}`}>
              {n.kind === 'group' && <span className="mr-[7px] -mt-[2px]"><TriDown /></span>}
              {n.text}
            </div>
          )
        ))}
      </div>
      <div className="w-[16px] shrink-0 bg-[#f1f1f1] border-r border-[#d5dbdb] flex flex-col items-center text-[#7a7a7a]">
        <span className="h-[18px] flex items-center"><TriDown up /></span>
        <span className="w-[13px] h-[661px] bg-[#c1c1c1]" />
        <span className="mt-auto h-[18px] flex items-center text-[#555]"><TriDown /></span>
      </div>
      <div className="flex-1 min-w-0 flex">
        <div className="flex-1 min-w-0 bg-white flex flex-col">
          <div className="bg-[#fafafa] pl-[19px] pr-[20px] h-[83px] shrink-0 border-b border-[#eaeded]">
            <div className="flex items-center pt-[11px]">
              <span className="text-[18px] font-bold text-[#16191f]">Instances</span>
              <span className="text-[18px] text-[#687078] ml-[5px]">(19)</span>
              <span className="text-[12px] font-bold text-[#0073bb] ml-[8px]">Info</span>
              <div className="ml-auto flex items-center gap-[8px] text-[14px] font-bold text-[#545b64]">
                <span className="w-[50px] h-[28px] border border-[#545b64] rounded-[2px] bg-white flex items-center justify-center"><RotateCw size={17} /></span>
                <span className="w-[98px] h-[28px] border border-[#d5dbdb] rounded-[2px] bg-white flex items-center justify-center text-[#aab7b8]">Connect</span>
                <span className="w-[156px] h-[28px] border border-[#545b64] rounded-[2px] bg-white flex items-center justify-center gap-[10px]">Instance state<TriDown /></span>
                <span className="w-[113px] h-[28px] border border-[#545b64] rounded-[2px] bg-white flex items-center justify-center gap-[10px]">Actions<TriDown /></span>
                <span className="flex gap-[2px] text-[#16191f]">
                  <span className="w-[154px] h-[28px] bg-[#ff9900] rounded-l-[2px] flex items-center justify-center">Launch instances</span>
                  <span className="w-[30px] h-[28px] bg-[#ff9900] rounded-r-[2px] flex items-center justify-center"><TriDown /></span>
                </span>
              </div>
            </div>
            <div className="flex items-center mt-[6px]">
              <div className="w-[647px] h-[27px] bg-white border border-[#687078] rounded-[2px] flex items-center pl-[8px] text-[13.5px] italic text-[#687078]">
                <Search size={15} className="text-[#545b64] mr-[10px]" />
                Find Instance by attribute or tag (case-sensitive)
              </div>
              <div className="ml-auto flex items-center text-[#545b64] pr-[4px]">
                <ChevronLeft size={20} strokeWidth={1.5} className="text-[#aab7b8]" />
                <span className="mx-[13px] text-[14px] font-bold text-[#16191f]">1</span>
                <ChevronRight size={20} strokeWidth={1.5} className="text-[#aab7b8] mr-[9px]" />
                <span className="h-[28px] border-l border-[#eaeded] mr-[13px]" />
                <Settings size={17} />
              </div>
            </div>
          </div>
          <div className="h-[33px] shrink-0 bg-[#fafafa] border-b border-[#eaeded] flex items-center text-[14px] font-bold text-[#545b64]">
            <div className="w-[52px] shrink-0 pl-[19px]"><Box /></div>
            {COLS.map((c, i) => (
              <div key={c.title} className={`${c.w} shrink-0 h-[20px] flex items-center pl-[17px] pr-[14px] whitespace-nowrap border-l border-[#879596] ${i === 0 ? 'border-[#eaeded]' : ''} ${i === 2 ? 'text-[#16191f]' : ''}`}>
                {c.title}
                {i === 0 && <SquarePen size={14} className="ml-[5px]" />}
                {(c.filter || i === 2) && <span className="ml-auto"><TriDown hollow={i !== 2} up={i === 2} /></span>}
              </div>
            ))}
          </div>
          {INSTANCES.map(r => (
            <div key={r[0]} className="h-[33.4px] shrink-0 border-b border-[#eaeded] flex items-center text-[14px] text-[#16191f] whitespace-nowrap">
              <div className="w-[52px] shrink-0 pl-[19px]"><Box /></div>
              <div className="w-[140px] shrink-0" />
              <div className="w-[200px] shrink-0 pl-[17px] text-[#0073bb] tracking-[0.3px]">{r[0]}</div>
              <div className="w-[160px] shrink-0 pl-[17px] flex items-center">
                {r[1] === 'Running' ? <CircleCheck size={16} strokeWidth={2.5} className="text-[#1d8102] shrink-0" /> : <CircleMinus size={16} strokeWidth={2} className="text-[#687078] shrink-0" />}
                <span className={`ml-[4px] min-w-[63px] pr-[4px] ${r[1] === 'Running' ? 'text-[#1d8102]' : 'text-[#687078]'}`}>{r[1]}</span>
                <ZoomIn size={16} className="-mt-[3px] text-[#545b64]" />
                <ZoomOut size={16} className="ml-[8px] -mt-[3px] text-[#545b64]" />
              </div>
              <div className="w-[150px] shrink-0 pl-[17px]">t2.micro</div>
              <div className="w-[150px] shrink-0 pl-[17px] flex items-center text-[#687078]">
                {r[1] === 'Running' ? <><Clock3 size={16} strokeWidth={2} className="shrink-0 mr-[4px]" />Initializing</> : <span className="text-[#16191f]">–</span>}
              </div>
              <div className="w-[131px] shrink-0 pl-[17px] flex items-center">No alarms<Plus size={16} strokeWidth={1.5} className="ml-[14px] text-[#545b64]" /></div>
              <div className="w-[169px] shrink-0 pl-[17px]">{r[2]}</div>
              <div className="w-[200px] shrink-0 pl-[17px]">{r[3]}</div>
              <div className="w-[150px] shrink-0 pl-[17px]">{r[4]}</div>
              <div className="w-[151px] shrink-0 pl-[17px]">–</div>
            </div>
          ))}
          <div className="h-[20px] shrink-0 bg-[#f2f3f3] flex items-end pt-[5px] border-b-2 border-[#d5dbdb]">
            <span className="w-[13px] text-center text-[8px] leading-[14px] text-[#888]">◂</span>
            <span className="flex-1 h-[14px] bg-[#c1c1c1]" />
          </div>
          <div className="flex-1 flex items-start pl-[19px] pr-[30px] pt-[14px]">
            <span className="text-[18px] font-bold text-[#16191f]">Select an instance</span>
            <div className="ml-auto flex items-center text-[#545b64] mt-[3px]">
              <Settings size={16} />
              <span className="h-[24px] border-l border-[#eaeded] mx-[9px]" />
              <X size={17} strokeWidth={1.5} />
            </div>
          </div>
        </div>
        <div className="w-[17px] shrink-0 bg-[#f1f1f1] flex flex-col items-center">
          <span className="h-[18px] flex items-center text-[#888]"><TriDown up /></span>
          <span className="w-[13px] h-[640px] bg-[#c1c1c1]" />
          <span className="mt-auto h-[18px] flex items-center text-[#555]"><TriDown /></span>
        </div>
      </div>
    </div>
    <div className="h-[29px] shrink-0 bg-[#232f3e] flex items-center text-white text-[12.5px] font-medium pl-[17px] pr-[16px]">
      <SquareTerminal size={17} />
      <span className="ml-[4px]">CloudShell</span>
      <span className="ml-[25px]">Feedback</span>
      <span className="ml-auto">Privacy</span>
      <span className="ml-[26px]">Terms</span>
      <span className="ml-[25px]">Cookie preferences</span>
    </div>
  </div>
);

/* ---------- Windows Clock ---------- */
const FocusIcon = () => (
  <svg viewBox="0 0 18 18" className="w-[17px] h-[17px]"><circle cx="9" cy="9" r="8" fill="none" stroke="#333" strokeDasharray="2.5 1" /><circle cx="9" cy="9" r="5.5" fill="none" stroke="#333" /><path d="M9 3.500a5.500 5.500 0 0 1 0 11z" fill="#333" /></svg>
);

const ClockWindow = () => (
  <div className="absolute left-[2657px] top-[519px] w-[727px] h-[508px] rounded-[8px] border border-[#b5b5b5] bg-[#f8f9fd] shadow-[0_4px_38px_rgba(0,0,0,0.38)] flex overflow-hidden font-['Open_Sans',sans-serif] text-[#1b1b1b]">
    <div className="w-[48px] shrink-0 bg-[#f3f5fb] border-r border-[#e9ebf2] flex flex-col items-center text-[#333]">
      <Menu size={17} strokeWidth={1.2} className="mt-[10px]" />
      <div className="mt-[21px] flex flex-col items-center gap-[23px]">
        <FocusIcon />
        <Hourglass size={17} strokeWidth={1.3} />
        <Bell size={17} strokeWidth={1.3} />
      </div>
      <div className="relative mt-[10px] w-[40px] h-[36px] bg-[#e9ebf1] rounded-[4px] flex items-center justify-center">
        <span className="absolute left-0 w-[3px] h-[16px] rounded-full bg-[#0067c0]" />
        <Timer size={17} strokeWidth={1.3} />
      </div>
      <Globe size={17} strokeWidth={1.3} className="mt-[13px]" />
      <span className="mt-auto w-[23px] h-[23px] rounded-full bg-[#dcdee3] flex items-center justify-center text-[9px] font-semibold">BF</span>
      <Settings size={16} strokeWidth={1.2} className="mt-[19px] mb-[15px]" />
    </div>
    <div className="flex-1 flex flex-col min-w-0">
      <div className="h-[40px] shrink-0 flex items-center pl-[7px] pr-[15px]">
        <svg viewBox="0 0 16 18" className="w-[15px] h-[17px]"><path d="M1 2h14v15H1z" fill="#9c9c9c" /><circle cx="8" cy="9" r="5.5" fill="#f4f4f4" /><path d="M8 9V5M8 9l3-2" stroke="#333" /><path d="M8 9v3" stroke="#d8402b" /></svg>
        <span className="ml-[8px] text-[12px] text-[#333]">Clock</span>
        <div className="ml-auto flex items-center gap-[35px] -mt-[6px]">
          <Minus size={13} strokeWidth={1.2} />
          <Square size={11} strokeWidth={1.2} />
          <X size={14} strokeWidth={1.2} />
        </div>
      </div>
      <div className="h-[82px] shrink-0 flex items-end justify-end pr-[90px] gap-[24px] text-[#333]">
        <Maximize2 size={16} strokeWidth={1} />
        <svg viewBox="0 0 16 16" className="w-[16px] h-[16px]"><path d="M6 1h9v14H9M6 1v5M1 10h5v5M1 15l5-5M10 1v5h5" fill="none" stroke="#333" /></svg>
      </div>
      <div className="mt-[-5px] h-[100px] flex items-baseline pl-[77px] font-light whitespace-nowrap leading-none [-webkit-text-stroke:1.5px_#1b1b1b]">
        <span className="text-[110px] leading-[100px] tracking-[-3px]">00:03:37</span>
        <span className="text-[80px] leading-[100px] tracking-[-2px] ml-[3px]">.00</span>
      </div>
      <div className="flex pl-[65px] text-[24px] leading-[30px] mt-[7px]">
        <span className="w-[146px] text-center">hr</span>
        <span className="w-[146px] text-center">min</span>
        <span className="w-[146px] text-center">sec</span>
      </div>
      <div className="flex mt-[40px] pl-[214px] gap-[26px] items-center">
        <span className="w-[67px] h-[67px] rounded-full bg-[#0067c0] flex items-center justify-center gap-[4px]">
          <span className="w-[8px] h-[22px] rounded-[2px] bg-white" /><span className="w-[8px] h-[22px] rounded-[2px] bg-white" />
        </span>
        <span className="w-[65px] h-[65px] rounded-full bg-white border border-[#e5e5e5] border-b-2 border-b-[#d0d0d0] flex items-center justify-center">
          <svg viewBox="0 0 24 24" className="w-[24px] h-[24px]"><path d="M4 2h18l-5 6 5 6H5v9H3V2z" fill="#1b1b1b" /></svg>
        </span>
        <span className="w-[65px] h-[65px] rounded-full bg-white border border-[#e5e5e5] border-b-2 border-b-[#d0d0d0] flex items-center justify-center">
          <RotateCcw size={23} strokeWidth={1} />
        </span>
      </div>
    </div>
  </div>
);

export default function App() {
  return (
    <div className="relative flex w-[3635px] h-[1030px] overflow-hidden bg-white">
      <JMeter />
      <Word />
      <div className={`${SANS} flex-1 min-w-0 flex flex-col`}>
        <ChromeBar />
        <Console />
      </div>
      <ClockWindow />
    </div>
  );
}
